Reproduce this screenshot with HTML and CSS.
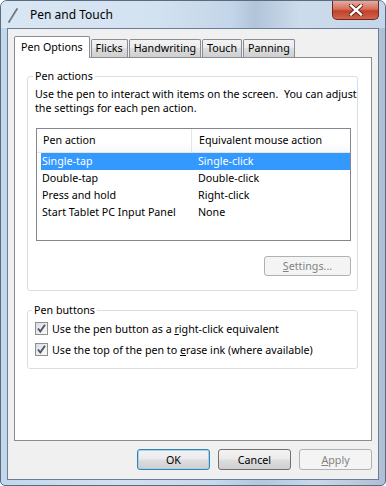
FILE: index.html
```html
<!DOCTYPE html>
<html lang="en">
<head>
    <meta charset="UTF-8">
    <title>Pen and Touch</title>
    <link rel="stylesheet" href="styles.css">
</head>
<body>
    <div class="window">
        <div class="titlebar">
            <svg class="app-icon" width="16" height="16" viewBox="0 0 16 16">
                <path d="M3 15 L11 2" stroke="#5b6470" stroke-width="1.6" stroke-linecap="round"/>
                <path d="M4 14 L11.5 2.5" stroke="#aab4c0" stroke-width="0.6"/>
            </svg>
            <span class="title">Pen and Touch</span>
            <div class="close-btn">
                <svg width="14" height="12" viewBox="0 0 14 12">
                    <path d="M2 1.5 L12 10.5 M12 1.5 L2 10.5" stroke="#5a1a10" stroke-width="4.2" stroke-linecap="square"/>
                    <path d="M2 1.5 L12 10.5 M12 1.5 L2 10.5" stroke="#ffffff" stroke-width="2.4" stroke-linecap="square"/>
                </svg>
            </div>
        </div>

        <div class="client">
            <div class="tabs">
                <div class="tab selected">Pen Options</div>
                <div class="tab">Flicks</div>
                <div class="tab">Handwriting</div>
                <div class="tab">Touch</div>
                <div class="tab">Panning</div>
            </div>

            <div class="panel">
                <fieldset class="group actions">
                    <legend>Pen actions</legend>
                    <p class="desc">Use the pen to interact with items on the screen.&nbsp; You can adjust the settings for each pen action.</p>

                    <div class="listview">
                        <div class="lv-header">
                            <div class="col first">Pen action</div>
                            <div class="col">Equivalent mouse action</div>
                        </div>
                        <div class="lv-row selected"><span>Single-tap</span><span>Single-click</span></div>
                        <div class="lv-row"><span>Double-tap</span><span>Double-click</span></div>
                        <div class="lv-row"><span>Press and hold</span><span>Right-click</span></div>
                        <div class="lv-row"><span>Start Tablet PC Input Panel</span><span>None</span></div>
                    </div>

                    <div class="settings-row">
                        <button class="btn disabled settings"><u>S</u>ettings...</button>
                    </div>
                </fieldset>

                <fieldset class="group buttons">
                    <legend>Pen buttons</legend>
                    <label class="check-row">
                        <span class="checkbox">
                            <svg width="11" height="11" viewBox="0 0 11 11"><path d="M2 5.5 L4.3 8.5 L9 1.8" fill="none" stroke="#47566f" stroke-width="1.9"/></svg>
                        </span>
                        <span>Use the pen button as a <u>r</u>ight-click equivalent</span>
                    </label>
                    <label class="check-row">
                        <span class="checkbox">
                            <svg width="11" height="11" viewBox="0 0 11 11"><path d="M2 5.5 L4.3 8.5 L9 1.8" fill="none" stroke="#47566f" stroke-width="1.9"/></svg>
                        </span>
                        <span>Use the top of the pen to <u>e</u>rase ink (where available)</span>
                    </label>
                </fieldset>
            </div>

            <div class="footer">
                <button class="btn default">OK</button>
                <button class="btn">Cancel</button>
                <button class="btn disabled"><u>A</u>pply</button>
            </div>
        </div>
    </div>
</body>
</html>
```

FILE: styles.css
```css
body {
    margin: 0;
    padding: 0;
    background: #ffffff;
    font-family: "Noto Sans", sans-serif;
    font-size: 10.7px;
    color: #000000;
}
.window {
    width: 386px;
    height: 486px;
    box-sizing: border-box;
    border: 1px solid #5b6b7e;
    border-radius: 7px 7px 5px 5px;
    background: linear-gradient(to right, #c3d7ec, #d2e1f1 30%, #c7d9ec 55%, #b3c7dd 68%, #c9daec 82%, #aebfd3 100%);
    display: flex;
    flex-direction: column;
    overflow: hidden;
}
.titlebar {
    height: 27px;
    display: flex;
    align-items: flex-start;
    background: linear-gradient(to right, #d9e6f3, #d3e2f1 40%, #c3d5e8 60%, #b1c4d9 66%, #cddcec 78%, #c4d6ea 100%);
}
.app-icon {
    margin: 6px 0 0 5px;
}
.title {
    margin: 6px 0 0 8px;
    font-size: 12px;
    line-height: 16px;
    color: #000;
}
.close-btn {
    margin-left: auto;
    margin-right: 6px;
    width: 45px;
    height: 18px;
    border: 1px solid #6b2a20;
    border-top: none;
    border-radius: 0 0 5px 5px;
    background: linear-gradient(to bottom, #e9a99c, #d6705c 45%, #c2412a 55%, #d2644a);
    display: flex;
    align-items: center;
    justify-content: center;
}
.client {
    margin: 0 6px 5px 6px;
    flex: 1;
    border: 1px solid #6a7f96;
    background: #f0f0f0;
    padding: 7px 6px 9px 6px;
    display: flex;
    flex-direction: column;
}
.tabs {
    display: flex;
    align-items: flex-end;
    height: 21px;
    gap: 1px;
    position: relative;
    z-index: 1;
}
.tab {
    height: 17px;
    line-height: 17px;
    padding: 0 4px;
    border: 1px solid #898c95;
    border-bottom: none;
    border-radius: 2px 2px 0 0;
    background: linear-gradient(to bottom, #f3f3f3, #ebebeb 45%, #dedede 50%, #cfcfcf);
}
.tab.selected {
    height: 21px;
    line-height: 20px;
    margin-bottom: -1px;
    padding: 0 6px;
    background: #ffffff;
}
.panel {
    height: 384px;
    box-sizing: border-box;
    border: 1px solid #898c95;
    background: #ffffff;
    padding: 11px 13px 0 12px;
}
.group {
    margin: 0;
    border: 1px solid #d5dfe5;
    border-radius: 3px;
    padding: 0 6px 0 8px;
}
.group legend {
    padding: 0 2px;
    margin-left: -3px;
    line-height: 14px;
}
.actions {
    padding-top: 4px;
    padding-bottom: 14px;
}
.desc {
    margin: 0 -6px 0 -1px;
    line-height: 14px;
}
.listview {
    margin-top: 13px;
    height: 113px;
    box-sizing: border-box;
    border: 1px solid #828790;
    padding: 0;
}
.lv-header {
    display: flex;
    height: 23px;
    border-bottom: 1px solid #e5e5e5;
    background: linear-gradient(to bottom, #ffffff, #ffffff 60%, #f7f8fa);
    line-height: 23px;
}
.lv-header .col {
    padding-left: 6px;
}
.lv-header .col.first {
    width: 148px;
    border-right: 1px solid #e5e5e5;
    margin-right: 1px;
}
.lv-row {
    display: flex;
    height: 17px;
    line-height: 17px;
    margin: 0 0 0 4px;
    padding-left: 1px;
}
.lv-row span:first-child {
    width: 156px;
}
.lv-row.selected {
    background: #3399ff;
    color: #ffffff;
}
.settings-row {
    display: flex;
    justify-content: flex-end;
    margin-top: 15px;
}
.btn {
    font-family: "Noto Sans", sans-serif;
    font-size: 10.7px;
    height: 21px;
    width: 73px;
    padding: 0;
    border: 1px solid #707070;
    border-radius: 3px;
    background: linear-gradient(to bottom, #f2f2f2, #ebebeb 48%, #dddddd 52%, #cfcfcf);
    color: #000;
}
.btn.default {
    border-color: #3c7fb1;
    box-shadow: inset 0 0 0 1px #9fd6ef;
}
.btn.disabled {
    border-color: #adb2b5;
    background: #f4f4f4;
    color: #838383;
}
.btn.settings {
    width: 87px;
    height: 20px;
}
.buttons {
    margin-top: 12px;
    padding-top: 1px;
    padding-bottom: 8px;
    padding-left: 7px;
}
.check-row {
    display: flex;
    align-items: center;
    height: 21px;
    gap: 4px;
}
.checkbox {
    width: 11px;
    height: 11px;
    border: 1px solid #8e8f8f;
    background: linear-gradient(135deg, #dcdcdc, #fbfbfb);
    display: flex;
    align-items: center;
    justify-content: center;
}
.footer {
    margin-top: 8px;
    display: flex;
    justify-content: flex-end;
    gap: 8px;
}
```
